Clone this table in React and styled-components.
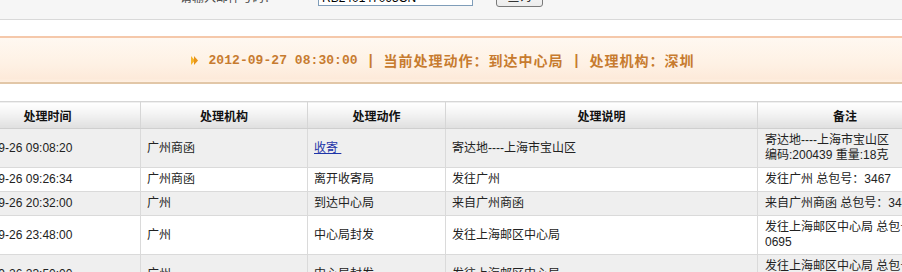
import styled, { createGlobalStyle } from "styled-components";

const GlobalStyle = createGlobalStyle`
  html, body {
    margin: 0;
    padding: 0;
    overflow: hidden;
    background: #fff;
  }
  body {
    font-family: "Liberation Sans", "Noto Sans CJK SC", sans-serif;
    font-size: 12px;
    color: #222;
  }
`;

const rows = [
  {
    time: "2012-09-26 09:08:20",
    org: "广州商函",
    action: "收寄",
    link: true,
    desc: "寄达地----上海市宝山区",
    note: ["寄达地----上海市宝山区", "编码:200439 重量:18克"],
  },
  {
    time: "2012-09-26 09:26:34",
    org: "广州商函",
    action: "离开收寄局",
    desc: "发往广州",
    note: ["发往广州 总包号：3467"],
  },
  {
    time: "2012-09-26 20:32:00",
    org: "广州",
    action: "到达中心局",
    desc: "来自广州商函",
    note: ["来自广州商函 总包号：3467"],
  },
  {
    time: "2012-09-26 23:48:00",
    org: "广州",
    action: "中心局封发",
    desc: "发往上海邮区中心局",
    note: ["发往上海邮区中心局 总包号：", "0695"],
  },
  {
    time: "2012-09-26 23:50:00",
    org: "广州",
    action: "中心局封发",
    desc: "发往上海邮区中心局",
    note: ["发往上海邮区中心局 总包号：", "0696"],
  },
];

const Arrow = () => (
  <svg width="7" height="9" viewBox="0 0 7 9">
    <path d="M0 0 L4 4.5 L0 9 Z" fill="#f6b52a" />
    <path d="M3 0 L7 4.5 L3 9 Z" fill="#e8941a" />
  </svg>
);

export default function App() {
  return (
    <>
      <GlobalStyle />
      <Page>
        <TopBar>
          <Label>* 请输入邮件号码：</Label>
          <SearchInput defaultValue="RB240147095CN" />
          <SearchButton>查询</SearchButton>
        </TopBar>

        <Banner>
          <Arrow />
          <DateText>2012-09-27 08:30:00</DateText>
          <Sep>|</Sep>
          <BannerText>当前处理动作：到达中心局</BannerText>
          <Sep>|</Sep>
          <BannerText>处理机构：深圳</BannerText>
        </Banner>

        <Table>
          <colgroup>
            <col style={{ width: 186 }} />
            <col style={{ width: 167 }} />
            <col style={{ width: 138 }} />
            <col style={{ width: 312 }} />
            <col style={{ width: 175 }} />
          </colgroup>
          <thead>
            <tr>
              <Th>处理时间</Th>
              <Th>处理机构</Th>
              <Th>处理动作</Th>
              <Th>处理说明</Th>
              <Th>备注</Th>
            </tr>
          </thead>
          <tbody>
            {rows.map((r, i) => (
              <Row key={i} $alt={i % 2 === 0}>
                <Td>{r.time}</Td>
                <Td>{r.org}</Td>
                <Td>{r.link ? <ActionLink href="#">{r.action} </ActionLink> : r.action}</Td>
                <Td>{r.desc}</Td>
                <NoteTd>
                  {r.note.map((line, j) => (
                    <NoteLine key={j}>{line}</NoteLine>
                  ))}
                </NoteTd>
              </Row>
            ))}
          </tbody>
        </Table>
      </Page>
    </>
  );
}

const Page = styled.div`
  width: 978px;
  margin-left: -46px;
`;

const TopBar = styled.div`
  display: flex;
  align-items: flex-end;
  padding: 0 0 13px 218px;
  box-sizing: border-box;
  height: 20px;
  overflow: hidden;
  background: #f6f6f6;
  border-bottom: 1px solid #d9d9d9;
`;

const Label = styled.div`
  width: 146px;
  line-height: 16px;
  margin-bottom: 0;
  color: #444;
  white-space: nowrap;
`;

const SearchInput = styled.input`
  width: 155px;
  height: 22px;
  box-sizing: border-box;
  border: 1px solid #7f9db9;
  padding: 6px 3px 0;
  font-family: "Liberation Sans", sans-serif;
  font-size: 12px;
  color: #000;
`;

const SearchButton = styled.button`
  width: 47px;
  height: 24px;
  margin: 0 0 -1px 23px;
  border: 1px solid #7a7a7a;
  border-radius: 3px;
  background: linear-gradient(#ffffff, #ececec);
  font-family: "Noto Sans CJK SC", sans-serif;
  font-size: 12px;
`;

const Banner = styled.div`
  margin-top: 16px;
  height: 48px;
  box-sizing: border-box;
  border-top: 2px solid #f5c8aa;
  border-bottom: 2px solid #e2c7a8;
  background: linear-gradient(#fff8f1 0%, #fef1e4 60%, #fdeada 92%, #fff0e2 100%);
  display: flex;
  align-items: center;
  justify-content: center;
  gap: 11px;
  color: #c77b2f;
  font-weight: bold;
`;

const DateText = styled.span`
  font-family: "Liberation Mono", monospace;
  font-size: 13px;
  letter-spacing: 0.05px;
  margin-left: -1px;
`;

const Sep = styled.span`
  font-family: "Liberation Sans", sans-serif;
  font-size: 14px;
`;

const BannerText = styled.span`
  font-family: "Noto Sans CJK SC", sans-serif;
  font-size: 14px;
  letter-spacing: 1px;
`;

const Table = styled.table`
  margin-top: 17px;
  width: 978px;
  table-layout: fixed;
  border-collapse: collapse;
`;

const Th = styled.th`
  height: 26px;
  padding: 0;
  font-family: "Noto Sans CJK SC", sans-serif;
  font-size: 12px;
  font-weight: bold;
  color: #111;
  text-align: center;
  background: linear-gradient(#ffffff 0%, #f3f3f3 45%, #dfdfdf 100%);
  border: 1px solid #d6d6d6;
  border-bottom-color: #cfcfcf;
`;

const Row = styled.tr`
  background: ${(p) => (p.$alt ? "#efefef" : "#ffffff")};
`;

const Td = styled.td`
  padding: 4px 6px;
  line-height: 15px;
  white-space: nowrap;
  overflow: hidden;
  border: 1px solid #dadada;
  vertical-align: middle;
`;

const NoteTd = styled(Td)`
  padding-left: 7px;
`;

const NoteLine = styled.div`
  white-space: nowrap;
`;

const ActionLink = styled.a`
  color: #1e35a8;
  text-decoration: underline;
  white-space: pre;
`;
